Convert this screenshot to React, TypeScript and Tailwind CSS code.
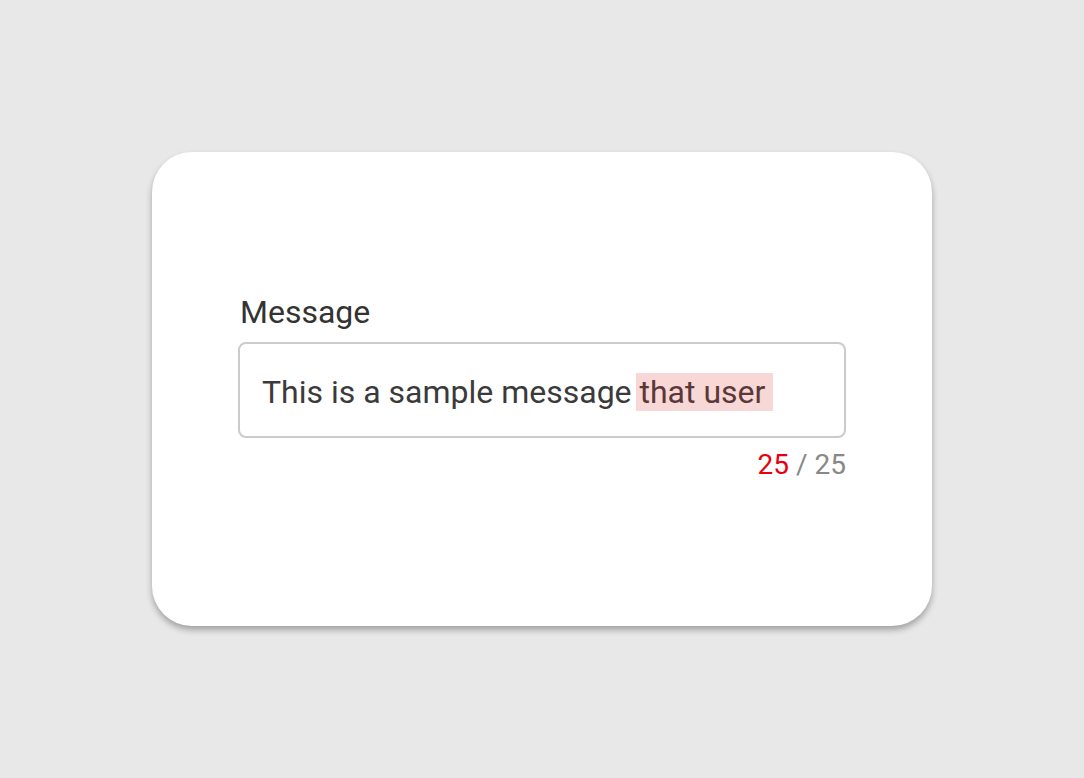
import { useState } from "react";

const LIMITE = 25;

export default function App() {
  const [texto] = useState("This is a sample message that user ");
  const dentro = texto.slice(0, LIMITE);
  const excesso = texto.slice(LIMITE);

  return (
    <div className="min-h-screen w-full bg-[#e8e8e8] flex items-center justify-center font-['Roboto',sans-serif]">
      <div className="w-[780px] h-[474px] bg-white rounded-[40px] shadow-[0_4px_6px_rgba(0,0,0,0.3)] flex flex-col justify-center px-[86px]">
        <label className="text-[32px] leading-[38px] text-[#333] pl-[2px] mb-[11px]">Message</label>
        <div className="h-[96px] border-2 border-[#cbcbcb] rounded-[8px] px-[22px] pt-[24px] pb-[20px] text-[32px] leading-[48px] text-[#3a3a3a] whitespace-pre">
          {dentro}
          <span className="bg-[#f8d7d7] text-[#5a3838] -ml-[4px] pl-[4px]">{excesso}</span>
        </div>
        <div className="text-right text-[28px] leading-[40px] mt-[7px] text-[#888]">
          <span className="text-[#e8000e]">{Math.min(texto.length, LIMITE)}</span> / {LIMITE}
        </div>
      </div>
    </div>
  );
}
